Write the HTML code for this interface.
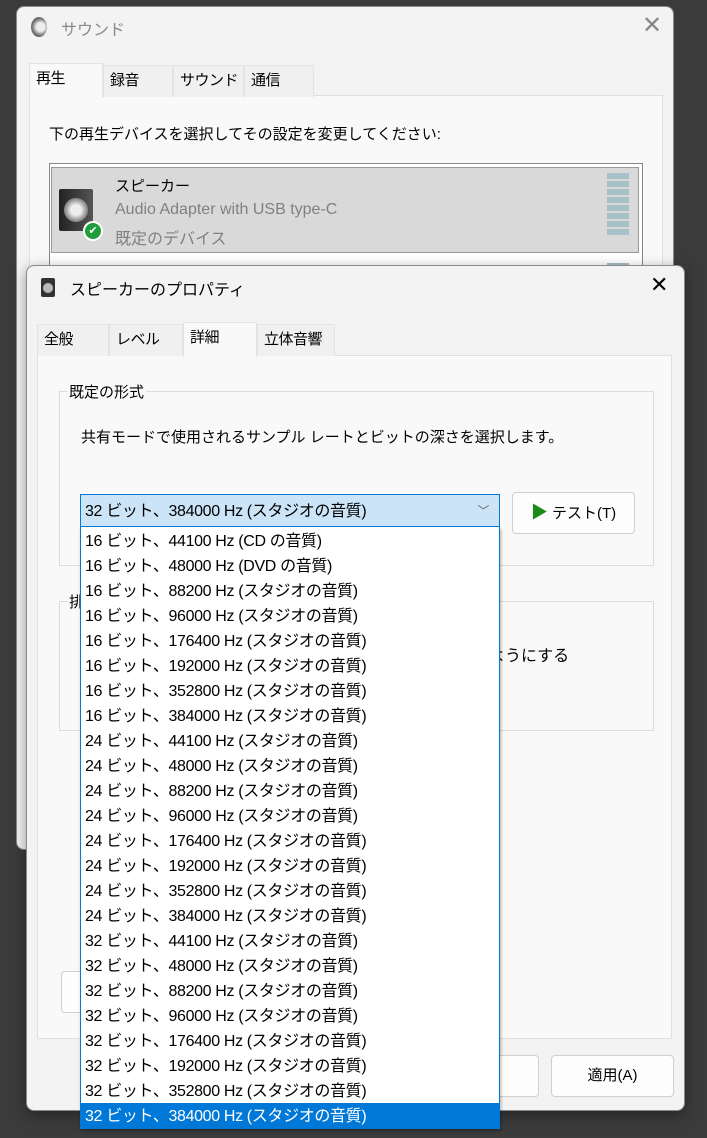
<!DOCTYPE html>
<html><head><meta charset="utf-8"><style>
*{box-sizing:border-box;margin:0;padding:0}
body{width:707px;height:1138px;background:#3b3b3b;position:relative;overflow:hidden;font-family:"Liberation Sans","Noto Sans CJK JP",sans-serif;font-size:15px;color:#000}
.abs{position:absolute;white-space:nowrap}
.win{background:#f0f0f0;border:1px solid #8a8a8a;border-radius:8px}
.panel{background:#f9f9f9;border:1px solid #e0e0e0}
.tab{position:absolute;border:1px solid #e3e3e3;border-bottom:none;background:#f0f0f0;padding:3px 6px 0;height:32px;white-space:nowrap;overflow:hidden;letter-spacing:-0.5px}
.tab.sel{background:#f9f9f9;top:-2px;height:35px}
.grp{border:1px solid #dcdcdc}
.row{height:25px;line-height:22px;padding-top:3px;padding-left:4px;white-space:nowrap;letter-spacing:-0.35px}
.btn{border:1px solid #d0d0d0;background:#fdfdfd;border-radius:4px;text-align:center}
</style></head><body>

<!-- sound window -->
<div class="abs win" style="left:16px;top:6px;width:658px;height:844px;background:#f3f3f3">
  <div class="abs" style="left:14px;top:10px;width:16px;height:20px;border-radius:50%;background:radial-gradient(circle at 60% 50%,#eee 30%,#777 60%,#333)"></div>
  <div class="abs" style="left:44px;top:9px;color:#8a8a8a;font-size:16px">サウンド</div>
  <div class="abs" style="left:625px;top:4px;font-size:24px;color:#888;font-weight:300">✕</div>
  <div class="abs panel" style="left:12px;top:88px;width:634px;height:760px"></div>
  <div class="abs" style="left:12px;top:58px;width:300px;height:32px">
    <div class="tab sel" style="width:74px;left:0">再生</div>
    <div class="tab" style="left:74px;width:70px">録音</div>
    <div class="tab" style="left:144px;width:71px">サウンド</div>
    <div class="tab" style="left:215px;width:70px">通信</div>
  </div>
  <div class="abs" style="left:32px;top:116px">下の再生デバイスを選択してその設定を変更してください:</div>
  <div class="abs" style="left:32px;top:156px;width:594px;height:120px;background:#fff;border:1px solid #828790"></div>
  <div class="abs" style="left:34px;top:160px;width:588px;height:86px;background:#d9d9d9;border:1px solid #999"></div>
  <div class="abs" style="left:42px;top:182px;width:34px;height:42px;background:linear-gradient(90deg,#222,#555);border-radius:2px"></div>
  <div class="abs" style="left:47px;top:191px;width:24px;height:24px;border-radius:50%;background:radial-gradient(circle,#eee 30%,#999 60%,#444)"></div>
  <div class="abs" style="left:66px;top:214px;width:20px;height:20px;border-radius:50%;background:#1e9e3a;border:2px solid #fff;color:#fff;font-size:11px;text-align:center;line-height:16px">✔</div>
  <div class="abs" style="left:98px;top:168px;font-size:15px">スピーカー</div>
  <div class="abs" style="left:98px;top:194px;color:#808080;font-size:16px">Audio Adapter with USB type-C</div>
  <div class="abs" style="left:98px;top:218px;color:#808080;font-size:16px">既定のデバイス</div>
  <div class="abs" style="left:590px;top:166px;width:22px;height:64px;background:repeating-linear-gradient(#a8c0c8 0 6px,#d9d9d9 6px 8px)"></div>
  <div class="abs" style="left:590px;top:256px;width:22px;height:10px;background:repeating-linear-gradient(#a8c0c8 0 6px,#fff 6px 8px)"></div>
</div>

<!-- properties window -->
<div class="abs win" style="left:26px;top:265px;width:659px;height:846px;background:#f3f3f3;box-shadow:0 4px 14px rgba(0,0,0,.4)">
  <div class="abs" style="left:14px;top:12px;width:14px;height:19px;background:#333;border-radius:2px"></div>
  <div class="abs" style="left:16px;top:17px;width:10px;height:10px;border-radius:50%;background:#bbb"></div>
  <div class="abs" style="left:43px;top:10px;font-size:16px">スピーカーのプロパティ</div>
  <div class="abs" style="left:623px;top:6px;font-size:22px;font-weight:300">✕</div>
  <div class="abs panel" style="left:10px;top:89px;width:635px;height:684px"></div>
  <div class="abs" style="left:10px;top:58px;width:320px;height:32px">
    <div class="tab" style="left:0;width:72px">全般</div>
    <div class="tab" style="left:72px;width:74px">レベル</div>
    <div class="tab sel" style="left:146px;width:74px">詳細</div>
    <div class="tab" style="left:220px;width:78px">立体音響</div>
  </div>
  <div class="abs grp" style="left:32px;top:125px;width:595px;height:175px"></div>
  <div class="abs" style="left:40px;top:115px;background:#f9f9f9;padding:0 2px">既定の形式</div>
  <div class="abs" style="left:54px;top:160px">共有モードで使用されるサンプル レートとビットの深さを選択します。</div>
  <div class="abs grp" style="left:32px;top:335px;width:595px;height:130px"></div>
  <div class="abs" style="left:40px;top:325px;background:#f9f9f9;padding:0 2px">排</div>
  <div class="abs" style="left:462px;top:376px;font-size:16px">ようにする</div>
  <div class="abs btn" style="left:485px;top:226px;width:123px;height:42px;line-height:40px"><span style="color:#1a8a1a;font-size:17px">▶</span> テスト(T)</div>
  <div class="abs btn" style="left:34px;top:705px;width:60px;height:42px"></div>
  <div class="abs btn" style="left:420px;top:789px;width:92px;height:42px;line-height:40px">ル</div>
  <div class="abs btn" style="left:524px;top:789px;width:123px;height:42px;line-height:40px">適用(A)</div>
</div>

<!-- combo -->
<div class="abs" style="left:80px;top:494px;width:420px;height:33px;background:#cce4f7;border:1px solid #0078d4;font-size:16px;line-height:31px;padding-left:4px;padding-top:1px;letter-spacing:-0.35px">32 ビット、384000 Hz (スタジオの音質)<span class="abs" style="right:10px;top:1px;color:#666;font-size:12px">﹀</span></div>
<!-- list -->
<div class="abs" style="left:80px;top:527px;width:420px;height:602px;background:#fff;border:1px solid #0078d4;border-top:none;font-size:16px;box-shadow:1px 2px 3px rgba(0,0,0,.3);padding-top:1px">
<div class="row">16 ビット、44100 Hz (CD の音質)</div>
<div class="row">16 ビット、48000 Hz (DVD の音質)</div>
<div class="row">16 ビット、88200 Hz (スタジオの音質)</div>
<div class="row">16 ビット、96000 Hz (スタジオの音質)</div>
<div class="row">16 ビット、176400 Hz (スタジオの音質)</div>
<div class="row">16 ビット、192000 Hz (スタジオの音質)</div>
<div class="row">16 ビット、352800 Hz (スタジオの音質)</div>
<div class="row">16 ビット、384000 Hz (スタジオの音質)</div>
<div class="row">24 ビット、44100 Hz (スタジオの音質)</div>
<div class="row">24 ビット、48000 Hz (スタジオの音質)</div>
<div class="row">24 ビット、88200 Hz (スタジオの音質)</div>
<div class="row">24 ビット、96000 Hz (スタジオの音質)</div>
<div class="row">24 ビット、176400 Hz (スタジオの音質)</div>
<div class="row">24 ビット、192000 Hz (スタジオの音質)</div>
<div class="row">24 ビット、352800 Hz (スタジオの音質)</div>
<div class="row">24 ビット、384000 Hz (スタジオの音質)</div>
<div class="row">32 ビット、44100 Hz (スタジオの音質)</div>
<div class="row">32 ビット、48000 Hz (スタジオの音質)</div>
<div class="row">32 ビット、88200 Hz (スタジオの音質)</div>
<div class="row">32 ビット、96000 Hz (スタジオの音質)</div>
<div class="row">32 ビット、176400 Hz (スタジオの音質)</div>
<div class="row">32 ビット、192000 Hz (スタジオの音質)</div>
<div class="row">32 ビット、352800 Hz (スタジオの音質)</div>
<div class="row" style="background:#0078d7;color:#fff">32 ビット、384000 Hz (スタジオの音質)</div>
</div>
</body></html>
